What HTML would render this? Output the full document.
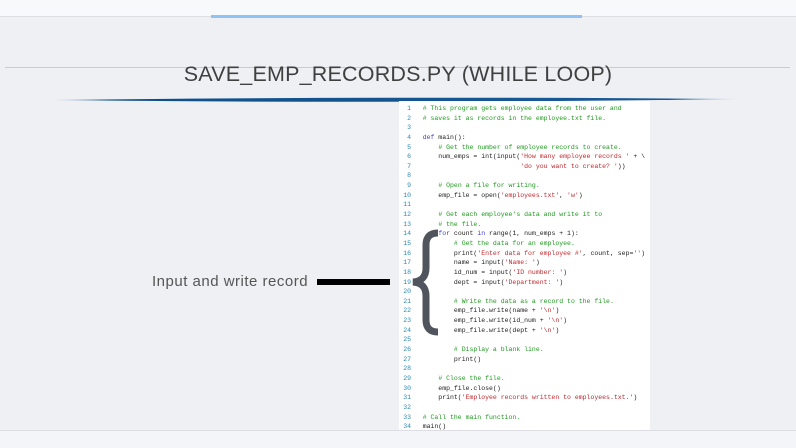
<!DOCTYPE html>
<html><head><meta charset="utf-8"><style>
*{margin:0;padding:0;box-sizing:border-box}
body{width:796px;height:448px;background:#eef0f4;position:relative;overflow:hidden;font-family:"Liberation Sans",sans-serif}
.top{position:absolute;left:0;top:0;width:796px;height:17px;background:#f8f9fb;border-bottom:1px solid #dcdee3}
.tb{position:absolute;left:211px;top:15px;width:371px;height:3px;background:#90c2f5}
.hl{position:absolute;left:5px;top:67px;width:785px;height:1px;background:#c9cbd0}
h1{position:absolute;left:0;width:796px;top:62px;text-align:center;font-weight:normal;font-size:21.5px;color:#404040;letter-spacing:0.2px}
.sw{position:absolute;left:53px;top:96px}
.code{position:absolute;left:399px;top:101px;width:251px;height:329px;background:#fff}
.bot{position:absolute;left:0;top:430px;width:796px;height:18px;background:#f4f5f8;border-top:1px solid #dcdee3}
pre{position:absolute;left:0;top:3px;font-family:"Liberation Mono",monospace;font-size:6.5px;line-height:9.64px;color:#222}
.n{color:#2a8ab0;display:inline-block;width:12px;text-align:right}
.c{color:#1e9a1e}.s{color:#c0282d}.k{color:#3a3ad8}
.lbl{position:absolute;left:152px;top:273px;font-size:15px;color:#555;letter-spacing:0.5px}
.bar{position:absolute;left:317px;top:279px;width:73px;height:6px;background:#000}
</style></head><body>
<div class="top"></div><div class="tb"></div>
<div class="hl"></div>
<h1>SAVE_EMP_RECORDS.PY (WHILE LOOP)</h1>
<svg class="sw" width="684" height="7"><defs><linearGradient id="g" x1="0" x2="1"><stop offset="0" stop-color="#0d4f8a" stop-opacity=".3"/><stop offset=".08" stop-color="#0d4f8a"/><stop offset=".9" stop-color="#1a5a94"/><stop offset="1" stop-color="#1a5a94" stop-opacity=".2"/></linearGradient></defs><path d="M0 4 Q340 0 684 3 Q340 8 0 4Z" fill="url(#g)"/></svg>
<div class="code"><pre>
<span class="n">1</span>   <span class="c"># This program gets employee data from the user and</span>
<span class="n">2</span>   <span class="c"># saves it as records in the employee.txt file.</span>
<span class="n">3</span>
<span class="n">4</span>   <span class="k">def</span> main():
<span class="n">5</span>       <span class="c"># Get the number of employee records to create.</span>
<span class="n">6</span>       num_emps = int(input(<span class="s">'How many employee records '</span> + \
<span class="n">7</span>                            <span class="s">'do you want to create? '</span>))
<span class="n">8</span>
<span class="n">9</span>       <span class="c"># Open a file for writing.</span>
<span class="n">10</span>       emp_file = open(<span class="s">'employees.txt'</span>, <span class="s">'w'</span>)
<span class="n">11</span>
<span class="n">12</span>       <span class="c"># Get each employee's data and write it to</span>
<span class="n">13</span>       <span class="c"># the file.</span>
<span class="n">14</span>       <span class="k">for</span> count <span class="k">in</span> range(1, num_emps + 1):
<span class="n">15</span>           <span class="c"># Get the data for an employee.</span>
<span class="n">16</span>           print(<span class="s">'Enter data for employee #'</span>, count, sep=<span class="s">''</span>)
<span class="n">17</span>           name = input(<span class="s">'Name: '</span>)
<span class="n">18</span>           id_num = input(<span class="s">'ID number: '</span>)
<span class="n">19</span>           dept = input(<span class="s">'Department: '</span>)
<span class="n">20</span>
<span class="n">21</span>           <span class="c"># Write the data as a record to the file.</span>
<span class="n">22</span>           emp_file.write(name + <span class="s">'\n'</span>)
<span class="n">23</span>           emp_file.write(id_num + <span class="s">'\n'</span>)
<span class="n">24</span>           emp_file.write(dept + <span class="s">'\n'</span>)
<span class="n">25</span>
<span class="n">26</span>           <span class="c"># Display a blank line.</span>
<span class="n">27</span>           print()
<span class="n">28</span>
<span class="n">29</span>       <span class="c"># Close the file.</span>
<span class="n">30</span>       emp_file.close()
<span class="n">31</span>       print(<span class="s">'Employee records written to employees.txt.'</span>)
<span class="n">32</span>
<span class="n">33</span>   <span class="c"># Call the main function.</span>
<span class="n">34</span>   main()</pre></div>
<div class="bot"></div>
<div class="lbl">Input and write record</div>
<div class="bar"></div>
<svg style="position:absolute;left:0;top:0" width="796" height="448"><path d="M438 233 Q426 233 426 245 L426 268 Q426 281 413 282 Q426 283 426 296 L426 320 Q426 332 438 332" fill="none" stroke="#50545c" stroke-width="7"/></svg>
</body></html>
